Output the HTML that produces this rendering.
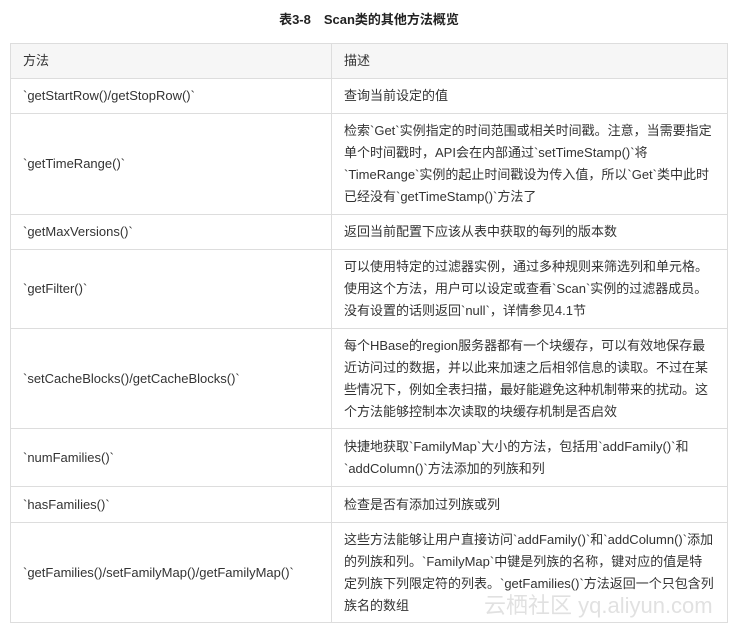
<!DOCTYPE html><html><head><meta charset="utf-8"><style>
body{margin:0;width:738px;height:632px;background:#fff;font-family:"Liberation Sans","Noto Sans CJK SC",sans-serif;color:#333;position:relative;overflow:hidden}
.t{position:absolute;top:9px;left:0;width:738px;text-align:center;font-weight:bold;font-size:13px;color:#222}
table{position:absolute;left:10px;top:43px;border-collapse:collapse;width:718px;font-size:13px}
td{border:1px solid #ddd;padding:0 12px;vertical-align:middle;line-height:22px}
td:first-child{width:296px}
tr.h td{background:#f6f6f6}
.wm{position:absolute;left:484px;top:593px;font-size:22px;color:rgba(205,205,205,.6);white-space:nowrap;line-height:26px}
</style></head><body>
<div class="t">表3-8　Scan类的其他方法概览</div>
<table>
<tr class="h" style="height:35px"><td>方法</td><td>描述</td></tr>
<tr style="height:35px"><td>`getStartRow()/getStopRow()`</td><td>查询当前设定的值</td></tr>
<tr style="height:101px"><td>`getTimeRange()`</td><td>检索`Get`实例指定的时间范围或相关时间戳。注意，当需要指定单个时间戳时，API会在内部通过`setTimeStamp()`将`TimeRange`实例的起止时间戳设为传入值，所以`Get`类中此时已经没有`getTimeStamp()`方法了</td></tr>
<tr style="height:35px"><td>`getMaxVersions()`</td><td>返回当前配置下应该从表中获取的每列的版本数</td></tr>
<tr style="height:79px"><td>`getFilter()`</td><td>可以使用特定的过滤器实例，通过多种规则来筛选列和单元格。使用这个方法，用户可以设定或查看`Scan`实例的过滤器成员。没有设置的话则返回`null`，详情参见4.1节</td></tr>
<tr style="height:100px"><td>`setCacheBlocks()/getCacheBlocks()`</td><td>每个HBase的region服务器都有一个块缓存，可以有效地保存最近访问过的数据，并以此来加速之后相邻信息的读取。不过在某些情况下，例如全表扫描，最好能避免这种机制带来的扰动。这个方法能够控制本次读取的块缓存机制是否启效</td></tr>
<tr style="height:58px"><td>`numFamilies()`</td><td>快捷地获取`FamilyMap`大小的方法，包括用`addFamily()`和`addColumn()`方法添加的列族和列</td></tr>
<tr style="height:36px"><td>`hasFamilies()`</td><td>检查是否有添加过列族或列</td></tr>
<tr style="height:100px"><td>`getFamilies()/setFamilyMap()/getFamilyMap()`</td><td>这些方法能够让用户直接访问`addFamily()`和`addColumn()`添加的列族和列。`FamilyMap`中键是列族的名称，键对应的值是特定列族下列限定符的列表。`getFamilies()`方法返回一个只包含列族名的数组</td></tr>
</table>
<div class="wm">云栖社区 yq.aliyun.com</div>
</body></html>
